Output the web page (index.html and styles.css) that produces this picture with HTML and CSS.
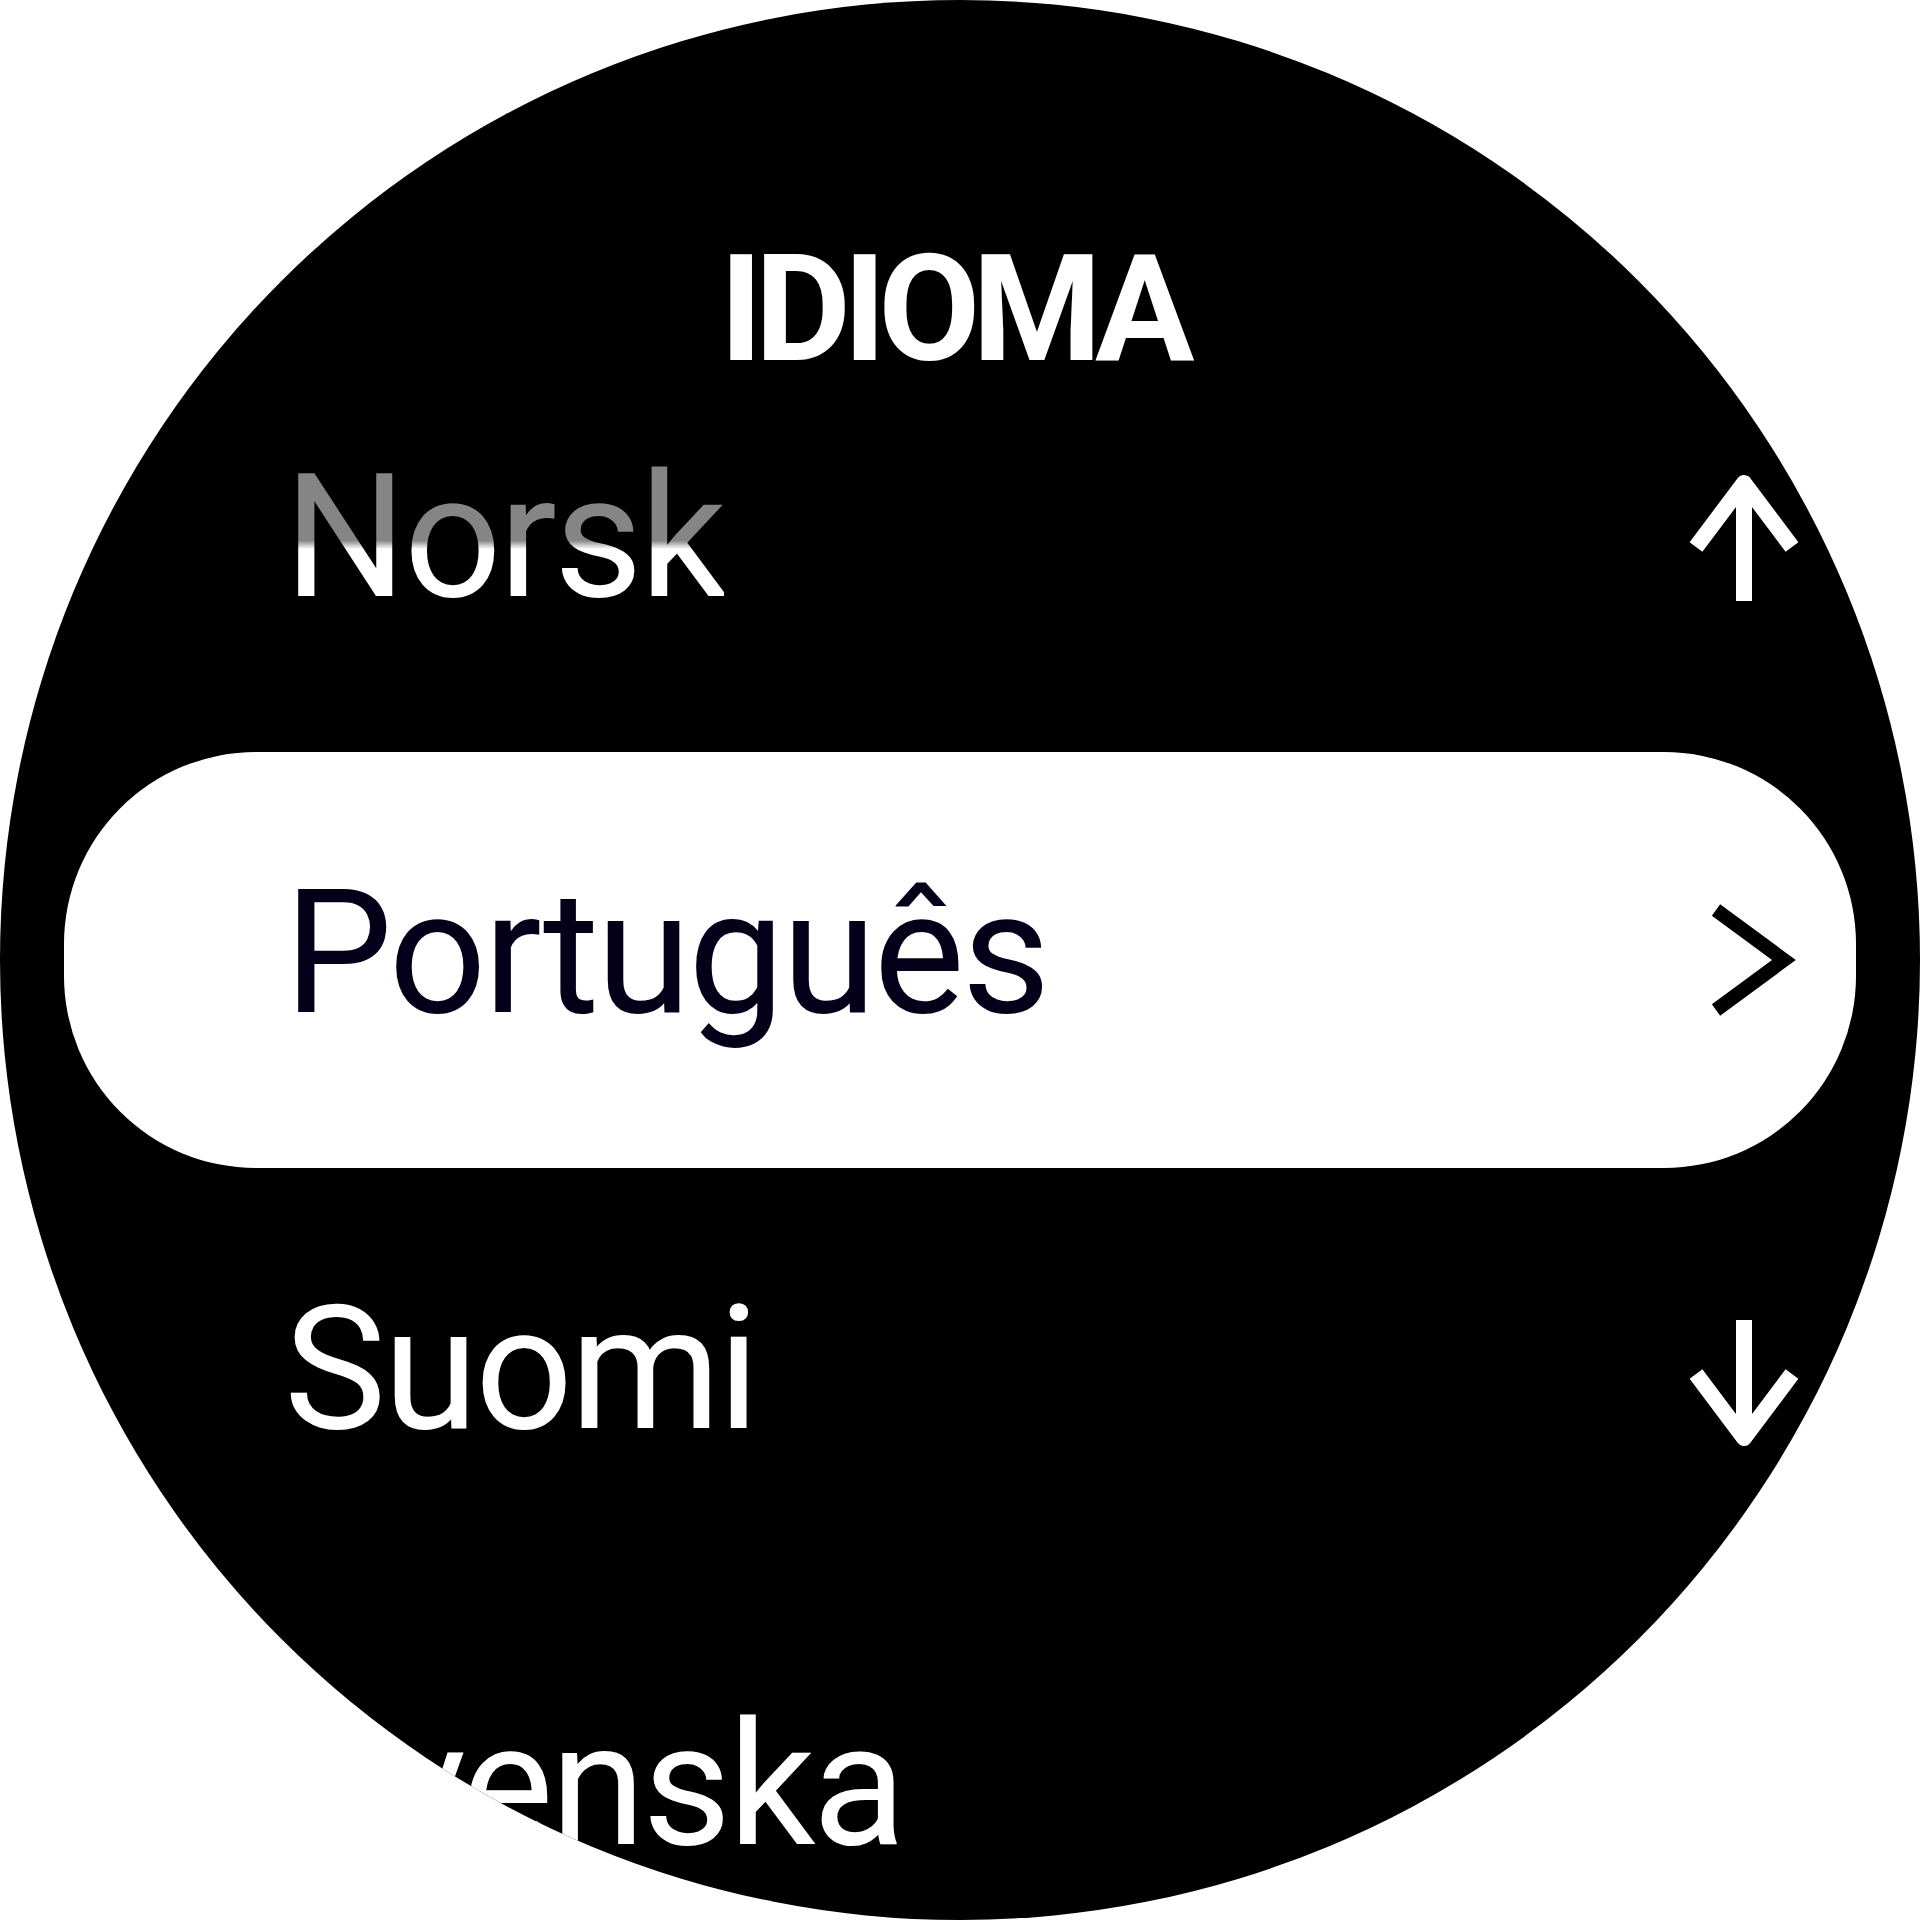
FILE: index.html
```html
<!DOCTYPE html>
<html lang="pt">
<head>
<meta charset="utf-8">
<title>Idioma</title>
<link rel="stylesheet" href="styles.css">
</head>
<body>
<div class="watch">
  <div class="title">IDIOMA</div>
  <div class="list">
    <div class="row">
      <span class="label faded">Norsk</span>
      <svg class="icon" width="112" height="128" viewBox="0 0 112 128"><path d="M8,74 L56,10 L104,74 M56,10 V128" fill="none" stroke="#fff" stroke-width="16" stroke-linejoin="round"/></svg>
    </div>
    <div class="row selected">
      <span class="label">Português</span>
      <svg class="icon chevron" width="112" height="112" viewBox="0 0 112 112"><polyline points="28,6 96,56 28,106" fill="none" stroke="#000" stroke-width="14"/></svg>
    </div>
    <div class="row">
      <span class="label">Suomi</span>
      <svg class="icon down" width="112" height="128" viewBox="0 0 112 128"><path d="M8,54 L56,118 L104,54 M56,118 V0" fill="none" stroke="#fff" stroke-width="16" stroke-linejoin="round"/></svg>
    </div>
    <div class="row">
      <span class="label">Svenska</span>
    </div>
  </div>
</div>
</body>
</html>
```
FILE: styles.css
```css
html, body {
  margin: 0;
  padding: 0;
  background: #fff;
}
.watch {
  width: 1920px;
  height: 1920px;
  border-radius: 50%;
  background: #000;
  overflow: hidden;
  font-family: Roboto, "Noto Sans", sans-serif;
  color: #fff;
}
.title {
  height: 336px;
  box-sizing: border-box;
  padding-top: 236px;
  text-align: center;
  font-size: 148px;
  line-height: 148px;
  font-weight: 700;
  letter-spacing: -8px;
  padding-right: 14px;
}
.list {
  display: flex;
  flex-direction: column;
}
.row {
  height: 416px;
  box-sizing: border-box;
  margin: 0 64px;
  padding: 0 56px 14px 220px;
  display: flex;
  align-items: center;
  justify-content: space-between;
  border-radius: 192px;
  flex-shrink: 0;
}
.label {
  font-size: 172px;
  line-height: 172px;
  font-weight: 400;
  letter-spacing: -3px;
}
.faded {
  background: linear-gradient(to bottom, #858585 0%, #858585 52%, #fff 57%, #fff 100%);
  -webkit-background-clip: text;
  background-clip: text;
  color: transparent;
}
.selected {
  background: #fff;
  color: #04001a;
}
.icon {
  display: block;
}
.chevron {
  margin-top: 14px;
}
.down {
  margin-top: 30px;
}
```
